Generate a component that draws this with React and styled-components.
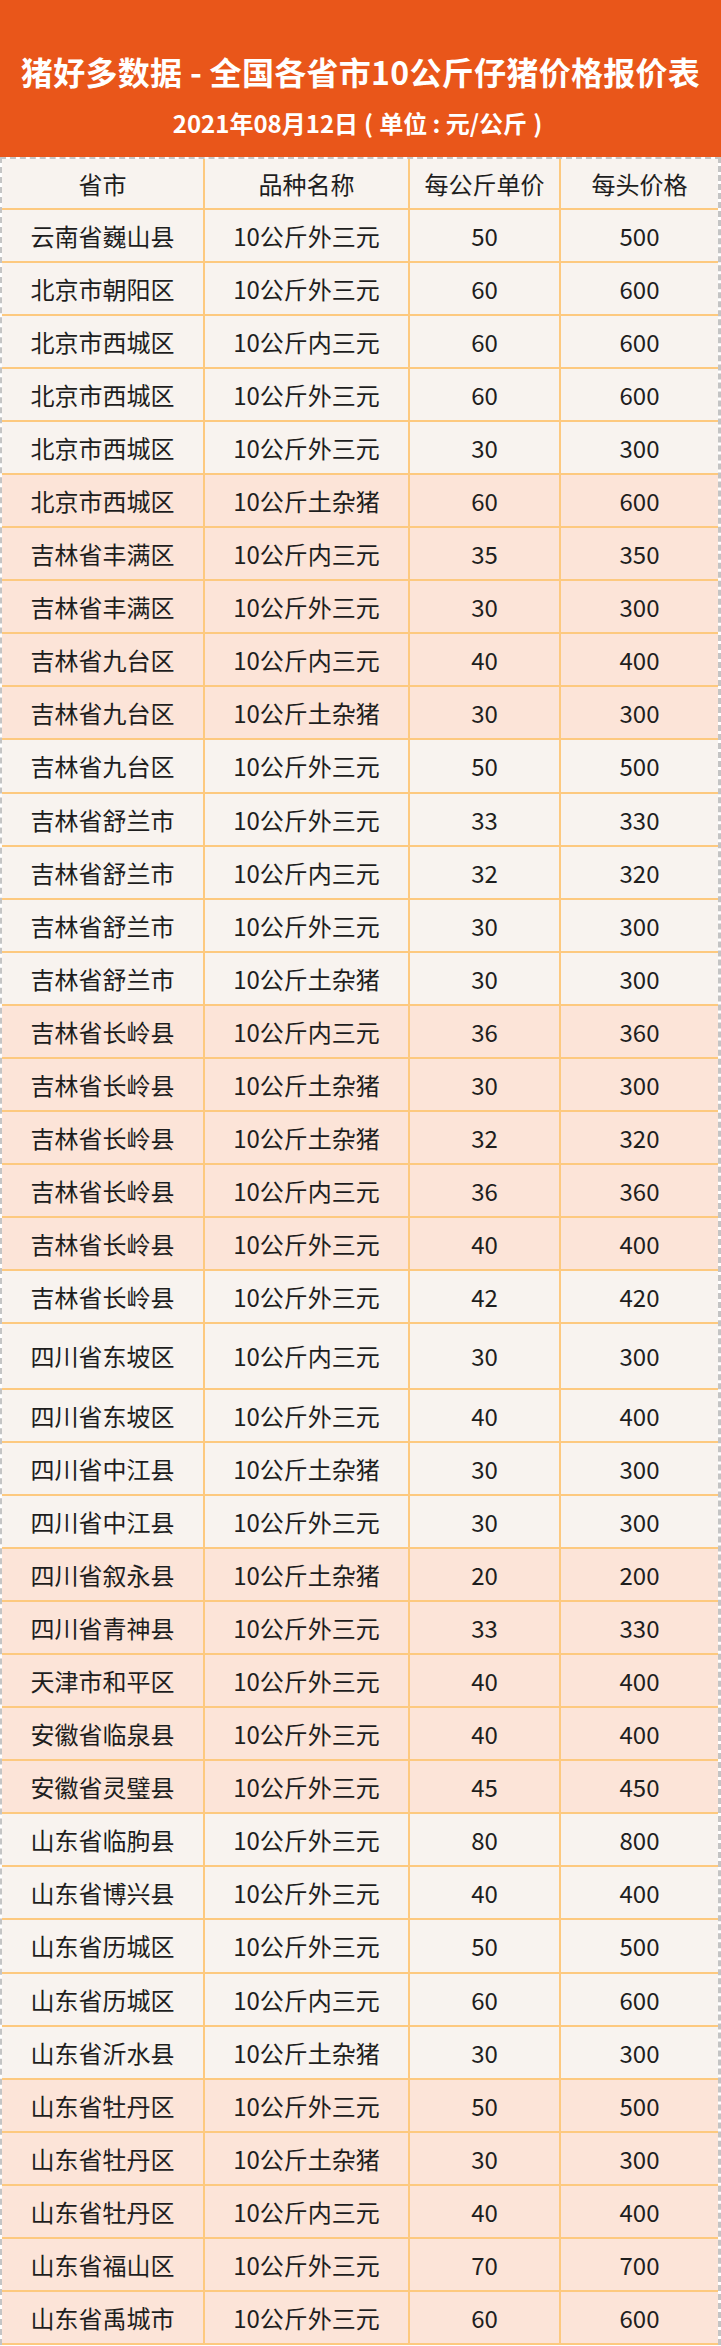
import styled, { createGlobalStyle } from 'styled-components'

const GlobalStyle = createGlobalStyle`
  body {
    margin: 0;
    background: #ffffff;
    font-family: "Noto Sans CJK SC", "Noto Sans", sans-serif;
  }
`

const rows = [
  ['云南省巍山县', '10公斤外三元', 50, 500],
  ['北京市朝阳区', '10公斤外三元', 60, 600],
  ['北京市西城区', '10公斤内三元', 60, 600],
  ['北京市西城区', '10公斤外三元', 60, 600],
  ['北京市西城区', '10公斤外三元', 30, 300],
  ['北京市西城区', '10公斤土杂猪', 60, 600],
  ['吉林省丰满区', '10公斤内三元', 35, 350],
  ['吉林省丰满区', '10公斤外三元', 30, 300],
  ['吉林省九台区', '10公斤内三元', 40, 400],
  ['吉林省九台区', '10公斤土杂猪', 30, 300],
  ['吉林省九台区', '10公斤外三元', 50, 500],
  ['吉林省舒兰市', '10公斤外三元', 33, 330],
  ['吉林省舒兰市', '10公斤内三元', 32, 320],
  ['吉林省舒兰市', '10公斤外三元', 30, 300],
  ['吉林省舒兰市', '10公斤土杂猪', 30, 300],
  ['吉林省长岭县', '10公斤内三元', 36, 360],
  ['吉林省长岭县', '10公斤土杂猪', 30, 300],
  ['吉林省长岭县', '10公斤土杂猪', 32, 320],
  ['吉林省长岭县', '10公斤内三元', 36, 360],
  ['吉林省长岭县', '10公斤外三元', 40, 400],
  ['吉林省长岭县', '10公斤外三元', 42, 420],
  ['四川省东坡区', '10公斤内三元', 30, 300],
  ['四川省东坡区', '10公斤外三元', 40, 400],
  ['四川省中江县', '10公斤土杂猪', 30, 300],
  ['四川省中江县', '10公斤外三元', 30, 300],
  ['四川省叙永县', '10公斤土杂猪', 20, 200],
  ['四川省青神县', '10公斤外三元', 33, 330],
  ['天津市和平区', '10公斤外三元', 40, 400],
  ['安徽省临泉县', '10公斤外三元', 40, 400],
  ['安徽省灵璧县', '10公斤外三元', 45, 450],
  ['山东省临朐县', '10公斤外三元', 80, 800],
  ['山东省博兴县', '10公斤外三元', 40, 400],
  ['山东省历城区', '10公斤外三元', 50, 500],
  ['山东省历城区', '10公斤内三元', 60, 600],
  ['山东省沂水县', '10公斤土杂猪', 30, 300],
  ['山东省牡丹区', '10公斤外三元', 50, 500],
  ['山东省牡丹区', '10公斤土杂猪', 30, 300],
  ['山东省牡丹区', '10公斤内三元', 40, 400],
  ['山东省福山区', '10公斤外三元', 70, 700],
  ['山东省禹城市', '10公斤外三元', 60, 600],
]

const Page = styled.div`
  width: 721px;
`

const Banner = styled.div`
  height: 157px;
  background: #e9561a;
  color: #ffffff;
  display: flex;
  flex-direction: column;
  align-items: center;
  box-sizing: border-box;
  padding-top: 48px;
`

const Title = styled.h1`
  margin: 0;
  font-size: 32px;
  line-height: 46px;
  font-weight: 700;
  letter-spacing: 0.3px;
`

const SubTitle = styled.div`
  margin-top: 14px;
  font-size: 24px;
  line-height: 30px;
  font-weight: 700;
`

const Paren = styled.span`
  margin: 0 6px;
`

const Table = styled.div`
  border-top: 2px dashed #c4c4c4;
  border-left: 2px dashed #c4c4c4;
  border-right: 3px dashed #c4c4c4;
`

const Row = styled.div`
  display: grid;
  grid-template-columns: 203px 205px 151px 1fr;
  height: ${(p) => p.$height}px;
  box-sizing: border-box;
  border-bottom: 2px solid #fdc97f;
  background: ${(p) => (p.$peach ? '#fce4d8' : '#f8f3ef')};
`

const Cell = styled.div`
  display: flex;
  align-items: center;
  justify-content: center;
  color: #1e1e1e;
  font-size: 24px;
  border-right: 2px solid #fdc97f;

  &:last-child {
    border-right: none;
  }
`

export default function App() {
  return (
    <Page>
      <GlobalStyle />
      <Banner>
        <Title>猪好多数据 - 全国各省市10公斤仔猪价格报价表</Title>
        <SubTitle>
          2021年08月12日<Paren>(</Paren>单位 : 元/公斤<Paren>)</Paren>
        </SubTitle>
      </Banner>

      <Table>
        <Row $height={51}>
          <Cell>省市</Cell>
          <Cell>品种名称</Cell>
          <Cell>每公斤单价</Cell>
          <Cell>每头价格</Cell>
        </Row>
        {rows.map(([place, kind, unit, head], i) => (
          <Row
            key={i}
            // every block of five rows switches colour, one row in Sichuan is taller
            $peach={Math.floor(i / 5) % 2 === 1}
            $height={i === 21 ? 66 : 53.05}
          >
            <Cell>{place}</Cell>
            <Cell>{kind}</Cell>
            <Cell>{unit}</Cell>
            <Cell>{head}</Cell>
          </Row>
        ))}
      </Table>
    </Page>
  )
}
